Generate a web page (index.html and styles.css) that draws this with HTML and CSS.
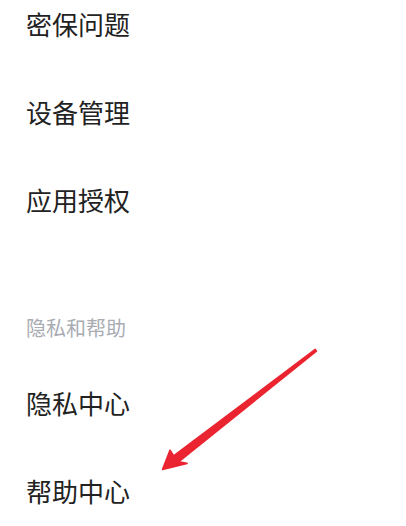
FILE: index.html
```html
<!DOCTYPE html>
<html lang="zh-CN">
<head>
<meta charset="utf-8">
<title>设置</title>
<link rel="stylesheet" href="styles.css">
</head>
<body>
<div class="page">
  <ul class="list first">
    <li class="row">密保问题</li>
    <li class="row">设备管理</li>
    <li class="row">应用授权</li>
  </ul>
  <div class="section-title">隐私和帮助</div>
  <ul class="list">
    <li class="row">隐私中心</li>
    <li class="row">帮助中心</li>
  </ul>
  <svg class="arrow" width="406" height="526" viewBox="0 0 406 526" aria-hidden="true">
    <polygon points="315.2,349.4 173.6,455.8 170,450.2 162.6,469.4 187,463.4 178.6,461.8 316.4,351.2" fill="#ea2430" stroke="#ea2430" stroke-width="1.6" stroke-linejoin="round"/>
  </svg>
</div>
</body>
</html>
```

FILE: styles.css
```css
html, body {
  margin: 0;
  padding: 0;
  background: #ffffff;
}
.page {
  position: relative;
  width: 406px;
  height: 526px;
  overflow: hidden;
  font-family: "Noto Sans CJK SC", "Noto Sans", sans-serif;
}
.list {
  list-style: none;
  margin: 0;
  padding: 0 0 0 26px;
}
.list.first {
  margin-top: -20px;
}
.row {
  height: 88px;
  line-height: 88px;
  font-size: 26px;
  color: #222222;
}
.section-title {
  padding: 74px 0 21px 26px;
  line-height: 20px;
  font-size: 20px;
  color: #a9acb3;
}
.arrow {
  position: absolute;
  left: 0;
  top: 0;
}
```
